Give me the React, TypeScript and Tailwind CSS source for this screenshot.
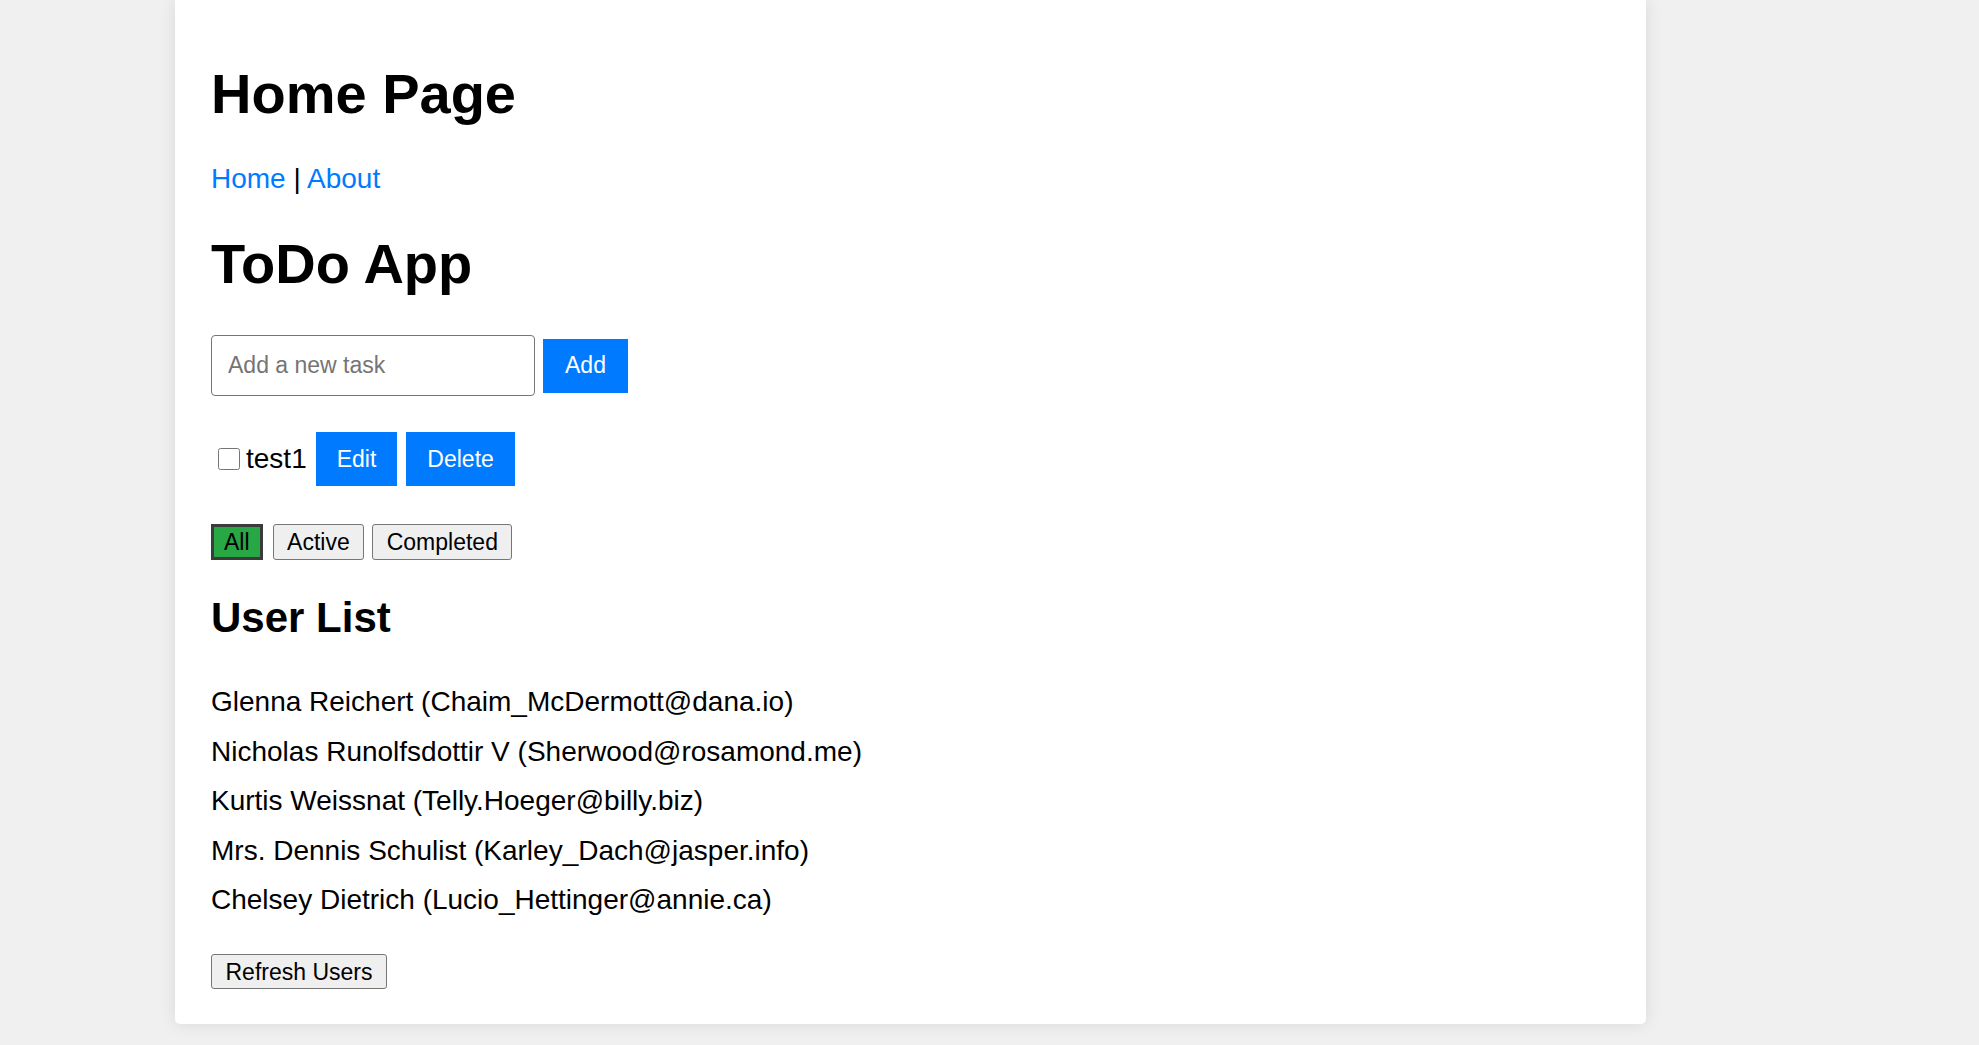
import React, { useState } from 'react';

type Todo = { id: number; text: string; done: boolean };
type Filter = 'all' | 'active' | 'completed';

const USERS = [
  { id: 1, name: 'Glenna Reichert', email: 'Chaim_McDermott@dana.io' },
  { id: 2, name: 'Nicholas Runolfsdottir V', email: 'Sherwood@rosamond.me' },
  { id: 3, name: 'Kurtis Weissnat', email: 'Telly.Hoeger@billy.biz' },
  { id: 4, name: 'Mrs. Dennis Schulist', email: 'Karley_Dach@jasper.info' },
  { id: 5, name: 'Chelsey Dietrich', email: 'Lucio_Hettinger@annie.ca' },
];

const grayBtn = 'h-[36px] px-[13.5px] rounded-[3px] border-[1.5px] border-[#767676] bg-[#efefef] text-[23px] leading-[26px] text-black';

export default function App() {
  const [todos, setTodos] = useState<Todo[]>([{ id: 1, text: 'test1', done: false }]);
  const [draft, setDraft] = useState('');
  const [filter, setFilter] = useState<Filter>('all');

  const add = () => {
    if (!draft.trim()) return;
    setTodos(t => [...t, { id: Date.now(), text: draft.trim(), done: false }]);
    setDraft('');
  };

  const shown = todos.filter(t => filter === 'all' || (filter === 'active' ? !t.done : t.done));

  return (
    <div className="min-h-screen bg-[#f0f0f0] font-['Liberation_Sans',Arial,sans-serif] text-black">
      <div className="ml-[175px] w-[1471px] bg-white rounded-b-[5px] shadow-[0_0_17px_rgba(0,0,0,0.1)] px-[36px] pt-[62px] pb-[35px]">
        <h1 className="text-[56px] leading-[64px] font-bold">Home Page</h1>
        <nav className="mt-[37px] text-[28px] leading-[32px]">
          <a href="#" className="text-[#007bff]">Home</a> | <a href="#" className="text-[#007bff]">About</a>
        </nav>

        <h1 className="mt-[37px] text-[56px] leading-[64px] font-bold">ToDo App</h1>

        <div className="mt-[39px] flex items-center gap-[8px]">
          <input
            value={draft}
            onChange={e => setDraft(e.target.value)}
            placeholder="Add a new task"
            className="h-[61px] w-[324px] rounded-[4px] border-[1.5px] border-[#767676] px-[16px] text-[23px] placeholder:text-[#757575] outline-none"
          />
          <button onClick={add} className="h-[54px] px-[22px] bg-[#007bff] text-white text-[23px]">Add</button>
        </div>

        <div className="mt-[36px] flex flex-col gap-[10px]">
          {shown.map(t => (
            <div key={t.id} className="flex items-center">
              <input
                type="checkbox"
                checked={t.done}
                onChange={() => setTodos(p => p.map(x => x.id === t.id ? { ...x, done: !x.done } : x))}
                className="ml-[7px] w-[22px] h-[22px]"
              />
              <span className={`ml-[6px] text-[28px] leading-[32px] ${t.done ? 'line-through' : ''}`}>{t.text}</span>
              <button className="ml-[9px] h-[54px] px-[21px] bg-[#007bff] text-white text-[23px]">Edit</button>
              <button
                onClick={() => setTodos(p => p.filter(x => x.id !== t.id))}
                className="ml-[9px] h-[54px] px-[21px] bg-[#007bff] text-white text-[23px]"
              >
                Delete
              </button>
            </div>
          ))}
        </div>

        <div className="mt-[38px] flex items-center">
          <button
            onClick={() => setFilter('all')}
            className={filter === 'all'
              ? 'h-[36px] px-[10px] border-[3px] border-[#3b3b3b] bg-[#28a745] text-[23px] leading-[26px] text-black'
              : grayBtn}
          >
            All
          </button>
          <button onClick={() => setFilter('active')} className={`ml-[10px] ${grayBtn}`}>Active</button>
          <button onClick={() => setFilter('completed')} className={`ml-[8px] ${grayBtn}`}>Completed</button>
        </div>

        <h2 className="mt-[34px] text-[42px] leading-[48px] font-bold">User List</h2>
        <ul className="mt-[35.5px]">
          {USERS.map(u => (
            <li key={u.id} className="py-[8.75px] text-[28px] leading-[32px]">{u.name} ({u.email})</li>
          ))}
        </ul>
        <button className="mt-[29px] h-[35px] px-[13.5px] rounded-[3px] border-[1.5px] border-[#767676] bg-[#efefef] text-[23px] leading-[26px]">
          Refresh Users
        </button>
      </div>
    </div>
  );
}
